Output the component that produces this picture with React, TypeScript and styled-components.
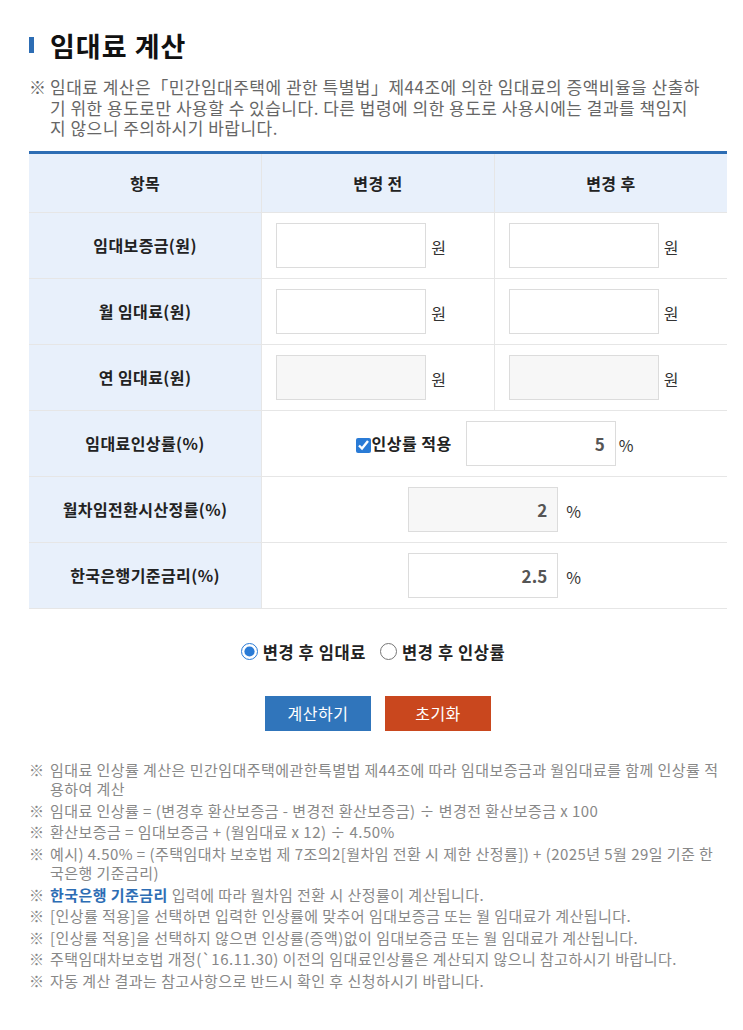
import React, { useState } from "react";
import styled, { createGlobalStyle } from "styled-components";

const GlobalStyle = createGlobalStyle`
  * {
    box-sizing: border-box;
  }
  body {
    margin: 0;
    background: #ffffff;
    font-family: "Noto Sans CJK KR", "Noto Sans", sans-serif;
    color: #222222;
  }
`;

const Page = styled.div`
  width: 743px;
  padding: 30px 16px 40px 29px;
`;

const Title = styled.h2`
  display: flex;
  align-items: center;
  gap: 16px;
  margin: 0;
  height: 30px;
  font-size: 27px;
  font-weight: 700;
  color: #111111;
  letter-spacing: 1px;

  &::before {
    content: "";
    width: 5px;
    height: 16px;
    background: #2d6db4;
  }
`;

const NoteList = styled.ul<{ $size: number; $color: string; $line: number; $gap: number; $spacing: number }>`
  list-style: none;
  margin: 0;
  padding: 0;
  font-size: ${(p) => p.$size}px;
  line-height: ${(p) => p.$line}px;
  letter-spacing: ${(p) => p.$spacing}px;
  color: ${(p) => p.$color};
  word-break: break-all;

  li {
    display: flex;
  }
  li + li {
    margin-top: ${(p) => p.$gap}px;
  }
`;

const Mark = styled.span`
  flex: 0 0 21px;
  letter-spacing: 0;
`;

const Strong = styled.b`
  color: #2d6db4;
  font-weight: 700;
`;

const Intro = styled.div`
  margin-top: 17px;
  padding-right: 24px;
`;

const Table = styled.table`
  width: 698px;
  margin-top: 12px;
  border-collapse: collapse;
  table-layout: fixed;
  border-top: 3px solid #2d6db4;

  th,
  td {
    border: 1px solid #e6e6e6;
  }
  tr > *:first-child {
    border-left: none;
  }
  tr > *:last-child {
    border-right: none;
  }
`;

const HeadCell = styled.th`
  height: 60px;
  background: #e8f0fb;
  font-size: 16px;
  font-weight: 700;
  letter-spacing: 0.4px;
  color: #222222;
`;

const LabelCell = styled.th`
  height: 66px;
  background: #e8f0fb;
  font-size: 16px;
  font-weight: 700;
  letter-spacing: 0.4px;
  color: #222222;
`;

const ValueCell = styled.td<{ $center?: boolean }>`
  height: 66px;
  padding: 0 0 0 ${(p) => (p.$center ? 0 : 14)}px;
  text-align: ${(p) => (p.$center ? "center" : "left")};
  white-space: nowrap;
`;

const Field = styled.input`
  width: 150px;
  height: 45px;
  padding: 0 10px;
  border: 1px solid #dcdcdc;
  background: ${(p) => (p.disabled ? "#f7f7f7" : "#ffffff")};
  font-family: inherit;
  font-size: 17px;
  font-weight: 700;
  color: #555555;
  text-align: right;
  vertical-align: middle;
  outline: none;
`;

const Unit = styled.span<{ $gap?: number }>`
  display: inline-block;
  margin-left: ${(p) => p.$gap ?? 5}px;
  font-size: 16px;
  color: #333333;
  vertical-align: middle;
  padding-top: 4px;
`;

const CheckLabel = styled.label`
  display: inline-flex;
  align-items: center;
  margin-right: 14px;
  font-size: 16px;
  font-weight: 700;
  letter-spacing: 0.5px;
  color: #222222;
  vertical-align: middle;

  input {
    width: 15px;
    height: 15px;
    margin: 4px 1px 0 0;
    accent-color: #2a7bd6;
  }
`;

const RadioRow = styled.div`
  display: flex;
  justify-content: center;
  gap: 14px;
  margin-top: 31px;
  padding-right: 10px;
`;

const RadioLabel = styled.label`
  display: inline-flex;
  align-items: center;
  gap: 5px;
  font-size: 16.5px;
  font-weight: 700;
  letter-spacing: 0.6px;
  color: #222222;

  input {
    width: 17px;
    height: 17px;
    margin: 0;
    accent-color: #2a7bd6;
  }
`;

const ButtonRow = styled.div`
  display: flex;
  justify-content: center;
  gap: 14px;
  margin-top: 32px;
`;

const Button = styled.button<{ $tone: "blue" | "red" }>`
  width: 106px;
  height: 35px;
  border: none;
  background: ${(p) => (p.$tone === "blue" ? "#3075bb" : "#c9471e")};
  color: #ffffff;
  font-family: inherit;
  font-size: 16px;
  letter-spacing: 0.5px;
  cursor: pointer;
`;

const Footnotes = styled.div`
  margin-top: 29px;
  padding-right: 8px;
`;

export default function App() {
  const [applyRate, setApplyRate] = useState(true);
  const [mode, setMode] = useState("rent");

  const rows = ["임대보증금(원)", "월 임대료(원)", "연 임대료(원)"];

  return (
    <Page>
      <GlobalStyle />
      <Title>임대료 계산</Title>

      <Intro>
        <NoteList $size={17} $color="#666666" $line={20.5} $gap={0} $spacing={0.5}>
          <li>
            <Mark>※</Mark>
            <span>
              임대료 계산은「민간임대주택에 관한 특별법」제44조에 의한 임대료의 증액비율을 산출하기 위한
              용도로만 사용할 수 있습니다. 다른 법령에 의한 용도로 사용시에는 결과를 책임지지 않으니
              주의하시기 바랍니다.
            </span>
          </li>
        </NoteList>
      </Intro>

      <Table>
        <thead>
          <tr>
            <HeadCell>항목</HeadCell>
            <HeadCell>변경 전</HeadCell>
            <HeadCell>변경 후</HeadCell>
          </tr>
        </thead>
        <tbody>
          {rows.map((label, i) => (
            <tr key={label}>
              <LabelCell>{label}</LabelCell>
              <ValueCell>
                <Field disabled={i === 2} />
                <Unit>원</Unit>
              </ValueCell>
              <ValueCell>
                <Field disabled={i === 2} />
                <Unit>원</Unit>
              </ValueCell>
            </tr>
          ))}
          <tr>
            <LabelCell>임대료인상률(%)</LabelCell>
            <ValueCell colSpan={2} $center>
              <CheckLabel>
                <input
                  type="checkbox"
                  checked={applyRate}
                  onChange={(e) => setApplyRate(e.target.checked)}
                />
                인상률 적용
              </CheckLabel>
              <Field defaultValue="5" />
              <Unit $gap={3}>%</Unit>
            </ValueCell>
          </tr>
          <tr>
            <LabelCell>월차임전환시산정률(%)</LabelCell>
            <ValueCell colSpan={2} $center>
              <Field disabled value="2" readOnly />
              <Unit $gap={8}>%</Unit>
            </ValueCell>
          </tr>
          <tr>
            <LabelCell>한국은행기준금리(%)</LabelCell>
            <ValueCell colSpan={2} $center>
              <Field defaultValue="2.5" />
              <Unit $gap={8}>%</Unit>
            </ValueCell>
          </tr>
        </tbody>
      </Table>

      <RadioRow>
        <RadioLabel>
          <input type="radio" name="mode" checked={mode === "rent"} onChange={() => setMode("rent")} />
          변경 후 임대료
        </RadioLabel>
        <RadioLabel>
          <input type="radio" name="mode" checked={mode === "rate"} onChange={() => setMode("rate")} />
          변경 후 인상률
        </RadioLabel>
      </RadioRow>

      <ButtonRow>
        <Button $tone="blue">계산하기</Button>
        <Button $tone="red">초기화</Button>
      </ButtonRow>

      <Footnotes>
        <NoteList $size={15} $color="#888888" $line={19.5} $gap={2} $spacing={0.45}>
          <li>
            <Mark>※</Mark>
            <span>
              임대료 인상률 계산은 민간임대주택에관한특별법 제44조에 따라 임대보증금과 월임대료를 함께 인상률
              적용하여 계산
            </span>
          </li>
          <li>
            <Mark>※</Mark>
            <span>임대료 인상률 = (변경후 환산보증금 - 변경전 환산보증금) ÷ 변경전 환산보증금 x 100</span>
          </li>
          <li>
            <Mark>※</Mark>
            <span>환산보증금 = 임대보증금 + (월임대료 x 12) ÷ 4.50%</span>
          </li>
          <li>
            <Mark>※</Mark>
            <span>
              예시) 4.50% = (주택임대차 보호법 제 7조의2[월차임 전환 시 제한 산정률]) + (2025년 5월 29일 기준
              한국은행 기준금리)
            </span>
          </li>
          <li>
            <Mark>※</Mark>
            <span>
              <Strong>한국은행 기준금리</Strong> 입력에 따라 월차임 전환 시 산정률이 계산됩니다.
            </span>
          </li>
          <li>
            <Mark>※</Mark>
            <span>[인상률 적용]을 선택하면 입력한 인상률에 맞추어 임대보증금 또는 월 임대료가 계산됩니다.</span>
          </li>
          <li>
            <Mark>※</Mark>
            <span>[인상률 적용]을 선택하지 않으면 인상률(증액)없이 임대보증금 또는 월 임대료가 계산됩니다.</span>
          </li>
          <li>
            <Mark>※</Mark>
            <span>주택임대차보호법 개정(`16.11.30) 이전의 임대료인상률은 계산되지 않으니 참고하시기 바랍니다.</span>
          </li>
          <li>
            <Mark>※</Mark>
            <span>자동 계산 결과는 참고사항으로 반드시 확인 후 신청하시기 바랍니다.</span>
          </li>
        </NoteList>
      </Footnotes>
    </Page>
  );
}
